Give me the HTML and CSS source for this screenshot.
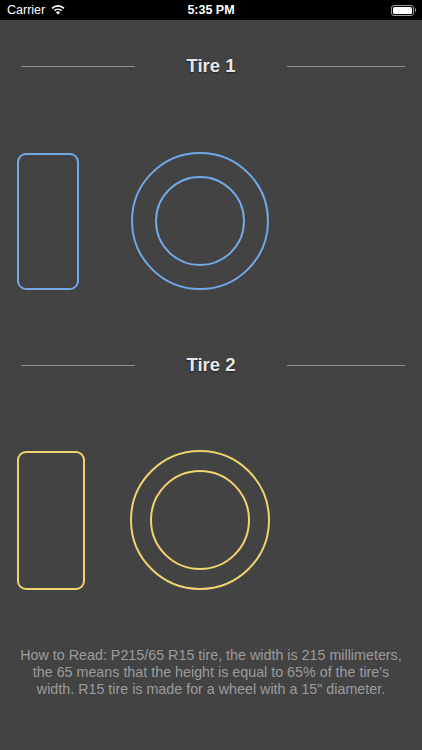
FILE: index.html
```html
<!DOCTYPE html>
<html>
<head>
<meta charset="utf-8">
<link rel="stylesheet" href="styles.css">
</head>
<body>
<div class="statusbar">
  <div class="sb-left">
    <span class="carrier">Carrier</span>
    <svg class="wifi" width="14" height="11" viewBox="0 0 14 11">
      <path d="M7 10.6 L4.9 8.3 A3 3 0 0 1 9.1 8.3 Z" fill="#fff"/>
      <path d="M3.4 6.7 A5.2 5.2 0 0 1 10.6 6.7" stroke="#fff" stroke-width="1.7" fill="none"/>
      <path d="M1.1 4.3 A8.4 8.4 0 0 1 12.9 4.3" stroke="#fff" stroke-width="1.7" fill="none"/>
    </svg>
  </div>
  <div class="sb-time">5:35 PM</div>
  <div class="sb-right">
    <div class="battery"><div class="battery-fill"></div></div>
    <div class="battery-nub"></div>
  </div>
</div>

<div class="header header-1">
  <div class="hline left"></div>
  <div class="title">Tire 1</div>
  <div class="hline right"></div>
</div>

<div class="shapes shapes-1">
  <div class="profile blue"></div>
  <div class="wheel blue"><div class="rim blue"></div></div>
</div>

<div class="header header-2">
  <div class="hline left"></div>
  <div class="title">Tire 2</div>
  <div class="hline right"></div>
</div>

<div class="shapes shapes-2">
  <div class="profile yellow"></div>
  <div class="wheel yellow"><div class="rim yellow"></div></div>
</div>

<p class="howto">How to Read: P215/65 R15 tire, the width is 215 millimeters,<br>the 65 means that the height is equal to 65% of the tire's<br>width. R15 tire is made for a wheel with a 15" diameter.</p>
</body>
</html>
```
FILE: styles.css
```css
* { box-sizing: border-box; }
html, body { margin: 0; padding: 0; }
body {
  width: 422px;
  height: 750px;
  background: #434343;
  font-family: "Liberation Sans", Arial, sans-serif;
  overflow: hidden;
}
.statusbar {
  height: 20px;
  background: #000;
  color: #fff;
  display: flex;
  align-items: center;
  justify-content: space-between;
  padding: 0 6px 0 7px;
  position: relative;
}
.sb-left { display: flex; align-items: center; gap: 6px; }
.carrier { font-size: 12.5px; }
.wifi { margin-top: -1px; }
.sb-time {
  position: absolute;
  left: 0; right: 0;
  text-align: center;
  font-size: 12.5px;
  font-weight: bold;
}
.sb-right { display: flex; align-items: center; }
.battery {
  width: 23px; height: 11px;
  border: 1px solid #9a9a9a;
  border-radius: 3px;
  padding: 1px;
}
.battery-fill { width: 100%; height: 100%; background: #fff; border-radius: 1.5px; }
.battery-nub { width: 1.5px; height: 4px; background: #9a9a9a; margin-left: 1px; border-radius: 0 1px 1px 0; }

.header {
  display: flex;
  align-items: center;
  height: 24px;
  padding-left: 21px;
}
.header-1 { margin-top: 34px; }
.header-2 { margin-top: 63px; }
.hline { height: 1px; background: #8e8e8e; }
.hline.left { width: 114px; }
.hline.right { width: 118px; }
.title {
  width: 152px;
  text-align: center;
  color: #e6e6e6;
  font-size: 18.5px;
  font-weight: bold;
  text-shadow: 0 1px 2px rgba(0,0,0,0.6);
}

.shapes {
  display: flex;
  align-items: center;
  padding-left: 17px;
}
.shapes-1 { margin-top: 74px; gap: 52px; }
.shapes-2 { margin-top: 73px; gap: 45px; }
.blue { border-color: #70a8e8; }
.yellow { border-color: #f1d36e; }
.profile {
  border-width: 2px;
  border-style: solid;
  border-radius: 9px;
}
.shapes-1 .profile { width: 62px; height: 137px; }
.shapes-2 .profile { width: 68px; height: 139px; border-radius: 9px; }
.wheel {
  border-width: 2px;
  border-style: solid;
  border-radius: 50%;
  display: flex;
  align-items: center;
  justify-content: center;
}
.rim {
  border-width: 2px;
  border-style: solid;
  border-radius: 50%;
}
.shapes-1 .wheel { width: 138px; height: 138px; }
.shapes-1 .rim { width: 90px; height: 90px; }
.shapes-2 .wheel { width: 140px; height: 140px; }
.shapes-2 .rim { width: 100px; height: 100px; }

.howto {
  margin: 57px 0 0;
  text-align: center;
  color: #9c9c9c;
  font-size: 14.3px;
  line-height: 17px;
}
```
